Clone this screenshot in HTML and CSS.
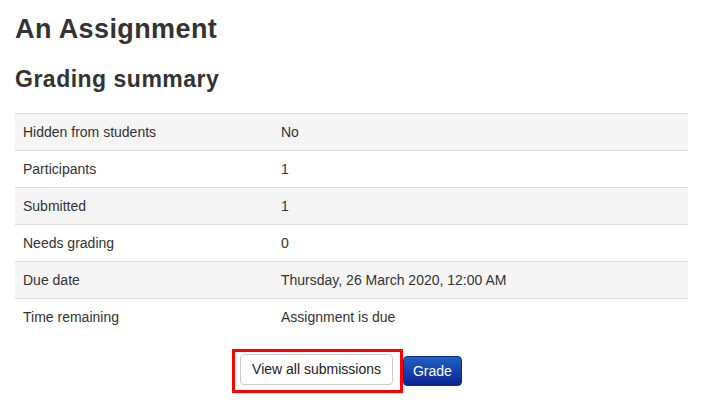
FILE: index.html
```html
<!DOCTYPE html>
<html>
<head>
<meta charset="utf-8">
<link rel="stylesheet" href="styles.css">
</head>
<body>
<div class="page">
  <h2 class="title">An Assignment</h2>
  <h3 class="subtitle">Grading summary</h3>
  <table class="summary">
    <colgroup><col class="col-label"><col></colgroup>
    <tr class="odd"><td>Hidden from students</td><td>No</td></tr>
    <tr><td>Participants</td><td>1</td></tr>
    <tr class="odd"><td>Submitted</td><td>1</td></tr>
    <tr><td>Needs grading</td><td>0</td></tr>
    <tr class="odd"><td>Due date</td><td>Thursday, 26 March 2020, 12:00 AM</td></tr>
    <tr><td>Time remaining</td><td>Assignment is due</td></tr>
  </table>
  <div class="actions">
    <span class="highlight"><button class="btn">View all submissions</button></span><button class="btn btn-primary">Grade</button>
  </div>
</div>
</body>
</html>
```
FILE: styles.css
```css
html, body { margin: 0; padding: 0; background: #fff; }
body { font-family: "Liberation Sans", Arial, sans-serif; color: #333; }
.page { padding: 0 20px 0 15px; }
.title { margin: 0; padding-top: 13px; font-size: 27px; letter-spacing: 0.4px; line-height: 32px; font-weight: bold; color: #333; }
.subtitle { margin: 0; padding-top: 20px; font-size: 23px; letter-spacing: 0.5px; line-height: 28px; font-weight: bold; color: #333; }
.summary { width: 100%; table-layout: fixed; border-collapse: collapse; margin-top: 20px; font-size: 14px; color: #333; }
.summary col.col-label { width: 258px; }
.summary td { border-top: 1px solid #ddd; padding: 0 8px; height: 36px; vertical-align: middle; }
.summary tr.odd td { background: #f5f5f5; }
.actions { display: flex; justify-content: center; align-items: center; margin-top: 14px; padding-right: 9px; }
.highlight { border: 3px solid #f00; padding: 2px 7px 5px 5px; display: inline-flex; }
.btn { font-family: "Liberation Sans", Arial, sans-serif; font-size: 14px; color: #222; background: #fff; border: 1px solid #ccc; border-radius: 4px; padding: 0 11px; height: 31px; line-height: 29px; }
.btn-primary { color: #fff; border-color: #0a2a8a; background: linear-gradient(#1f62c0, #0c2298); margin-left: 0; height: 30px; padding: 0 9px; }
```
